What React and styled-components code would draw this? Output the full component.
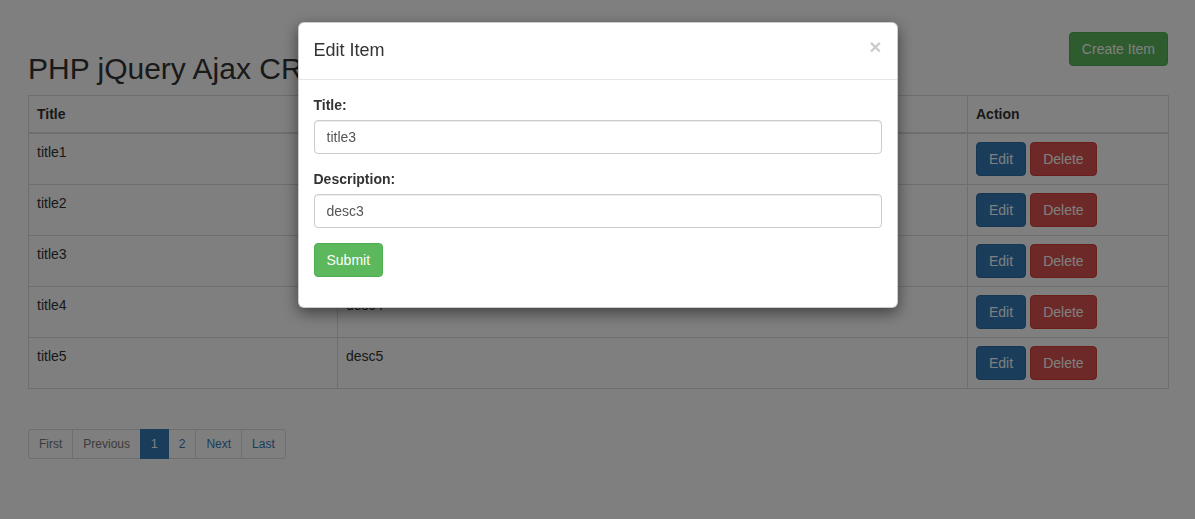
import React from "react";
import styled, { createGlobalStyle, css } from "styled-components";

const Global = createGlobalStyle`
  * { box-sizing: border-box; }
  html, body { margin: 0; padding: 0; background: #fff; }
  body {
    font-family: "Liberation Sans", Arial, sans-serif;
    font-size: 14px;
    line-height: 1.42857143;
    color: #333;
  }
`;

const Page = styled.div`
  padding: 32px 27px 0 28px;
`;

const Wrapper = styled.div`
  width: 1140px;
`;

const TopBar = styled.div`
  display: flex;
  justify-content: space-between;
  align-items: flex-start;
`;

const Heading = styled.h2`
  margin: 20px 0 10px;
  font-size: 30px;
  line-height: 1.1;
  font-weight: 500;
  color: #333;
`;

const variants = {
  primary: css`background: #337ab7; border-color: #2e6da4;`,
  danger: css`background: #d9534f; border-color: #d43f3a;`,
  success: css`background: #5cb85c; border-color: #4cae4c;`,
};

const Button = styled.button`
  display: inline-block;
  padding: 6px 12px;
  font-family: inherit;
  font-size: 14px;
  line-height: 1.42857143;
  font-weight: 400;
  color: #fff;
  border: 1px solid transparent;
  border-radius: 4px;
  cursor: pointer;
  ${(p) => variants[p.$variant]}
`;

const Table = styled.table`
  width: 1140px;
  table-layout: fixed;
  border-collapse: collapse;
  border: 1px solid #ddd;
  margin-bottom: 20px;
`;

const Th = styled.th`
  text-align: left;
  font-weight: bold;
  padding: 8px;
  line-height: 1.42857143;
  vertical-align: bottom;
  border: 1px solid #ddd;
  border-bottom: 2px solid #ddd;
`;

const Td = styled.td`
  padding: 8px;
  line-height: 1.42857143;
  vertical-align: top;
  border: 1px solid #ddd;
`;

const Actions = styled.div`
  display: flex;
  gap: 4px;
`;

const Pager = styled.ul`
  display: flex;
  list-style: none;
  padding: 0;
  margin: 40px 0 20px;
`;

const PageLink = styled.li`
  position: relative;
  margin-left: -1px;
  padding: 5px 10px;
  font-size: 12px;
  line-height: 1.5;
  border: 1px solid #ddd;
  background: #fff;
  color: #337ab7;
  &:first-child {
    margin-left: 0;
    border-radius: 3px 0 0 3px;
  }
  &:last-child {
    border-radius: 0 3px 3px 0;
  }
  ${(p) =>
    p.$disabled &&
    css`
      color: #777;
    `}
  ${(p) =>
    p.$active &&
    css`
      z-index: 3;
      color: #fff;
      background: #337ab7;
      border-color: #337ab7;
    `}
`;

const Backdrop = styled.div`
  position: fixed;
  inset: 0;
  z-index: 1040;
  background: rgba(0, 0, 0, 0.5);
  overflow: hidden;
`;

const Dialog = styled.div`
  width: 600px;
  margin: 22px auto 0;
  background: #fff;
  border: 1px solid rgba(0, 0, 0, 0.2);
  border-radius: 6px;
  box-shadow: 0 5px 15px rgba(0, 0, 0, 0.5);
`;

const ModalHeader = styled.div`
  display: flex;
  justify-content: space-between;
  align-items: flex-start;
  padding: 15px;
  border-bottom: 1px solid #e5e5e5;
`;

const ModalTitle = styled.h4`
  margin: 0;
  font-size: 18px;
  font-weight: 500;
  line-height: 1.42857143;
  color: #333;
`;

const Close = styled.button`
  margin-top: -2px;
  padding: 0;
  background: transparent;
  border: 0;
  font-family: inherit;
  font-size: 21px;
  font-weight: bold;
  line-height: 1;
  color: #000;
  opacity: 0.2;
  text-shadow: 0 1px 0 #fff;
  cursor: pointer;
`;

const ModalBody = styled.div`
  padding: 15px;
`;

const FormGroup = styled.div`
  margin-bottom: 15px;
`;

const Label = styled.label`
  display: block;
  margin-bottom: 5px;
  font-weight: bold;
`;

const Input = styled.input`
  display: block;
  width: 100%;
  height: 34px;
  padding: 6px 12px;
  font-family: inherit;
  font-size: 14px;
  line-height: 1.42857143;
  color: #555;
  background: #fff;
  border: 1px solid #ccc;
  border-radius: 4px;
  box-shadow: inset 0 1px 1px rgba(0, 0, 0, 0.075);
  outline: none;
`;

const rows = [1, 2, 3, 4, 5].map((n) => ({ title: `title${n}`, desc: `desc${n}` }));

export default function App() {
  return (
    <>
      <Global />
      <Page>
        <Wrapper>
          <TopBar>
            <Heading>PHP jQuery Ajax CRUD Example</Heading>
            <Button $variant="success">Create Item</Button>
          </TopBar>
          <Table>
            <colgroup>
              <col style={{ width: 309 }} />
              <col style={{ width: 630 }} />
              <col style={{ width: 201 }} />
            </colgroup>
            <thead>
              <tr>
                <Th>Title</Th>
                <Th>Description</Th>
                <Th>Action</Th>
              </tr>
            </thead>
            <tbody>
              {rows.map((r) => (
                <tr key={r.title}>
                  <Td>{r.title}</Td>
                  <Td>{r.desc}</Td>
                  <Td>
                    <Actions>
                      <Button $variant="primary">Edit</Button>
                      <Button $variant="danger">Delete</Button>
                    </Actions>
                  </Td>
                </tr>
              ))}
            </tbody>
          </Table>
          <Pager>
            <PageLink $disabled>First</PageLink>
            <PageLink $disabled>Previous</PageLink>
            <PageLink $active>1</PageLink>
            <PageLink>2</PageLink>
            <PageLink>Next</PageLink>
            <PageLink>Last</PageLink>
          </Pager>
        </Wrapper>
      </Page>
      <Backdrop>
        <Dialog>
          <ModalHeader>
            <ModalTitle>Edit Item</ModalTitle>
            <Close aria-label="Close">×</Close>
          </ModalHeader>
          <ModalBody>
            <FormGroup>
              <Label>Title:</Label>
              <Input defaultValue="title3" />
            </FormGroup>
            <FormGroup>
              <Label>Description:</Label>
              <Input defaultValue="desc3" />
            </FormGroup>
            <FormGroup>
              <Button $variant="success">Submit</Button>
            </FormGroup>
          </ModalBody>
        </Dialog>
      </Backdrop>
    </>
  );
}
